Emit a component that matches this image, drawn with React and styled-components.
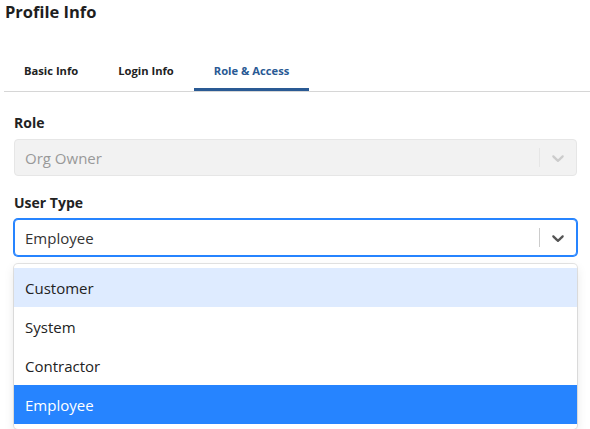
import React from "react";
import styled, { createGlobalStyle } from "styled-components";

const GlobalStyle = createGlobalStyle`
  body {
    margin: 0;
    background: #fff;
    font-family: "Open Sans", "Liberation Sans", sans-serif;
    color: #222;
  }
`;

const Chevron = ({ color }) => (
  <svg width="20" height="20" viewBox="0 0 20 20" fill={color}>
    <path d="M4.516 7.548c0.436-0.446 1.043-0.481 1.576 0l3.908 3.747 3.908-3.747c0.533-0.481 1.141-0.446 1.574 0 0.436 0.445 0.408 1.197 0 1.615-0.406 0.418-4.695 4.502-4.695 4.502-0.217 0.223-0.502 0.335-0.787 0.335s-0.57-0.112-0.789-0.335c0 0-4.287-4.084-4.695-4.502s-0.436-1.17 0-1.615z" />
  </svg>
);

const tabs = ["Basic Info", "Login Info", "Role & Access"];
const userTypes = ["Customer", "System", "Contractor", "Employee"];

const App = () => {
  return (
    <Page>
      <GlobalStyle />
      <Title>Profile Info</Title>
      <TabBar>
        {tabs.map((t, i) => (
          <Tab key={t} active={i === 2}>
            {t}
          </Tab>
        ))}
      </TabBar>
      <Form>
        <Field>
          <Label>Role</Label>
          <Select disabled>
            <Value disabled>Org Owner</Value>
            <Separator disabled />
            <Indicator>
              <Chevron color="#cccccc" />
            </Indicator>
          </Select>
        </Field>
        <Field>
          <Label>User Type</Label>
          <Select focused>
            <Value>Employee</Value>
            <Separator />
            <Indicator>
              <Chevron color="#555555" />
            </Indicator>
          </Select>
          <Menu>
            {userTypes.map((u, i) => (
              <Option key={u} hovered={i === 0} selected={u === "Employee"}>
                {u}
              </Option>
            ))}
          </Menu>
        </Field>
      </Form>
    </Page>
  );
};

const Page = styled.div`
  width: 590px;
`;

const Title = styled.h1`
  margin: 0;
  padding-left: 5px;
  font-size: 16.5px;
  line-height: 24px;
  font-weight: 700;
  color: #1e1e1e;
`;

const TabBar = styled.div`
  display: flex;
  margin: 28px 0 0 4px;
  border-bottom: 1px solid #d6d6d6;
`;

const Tab = styled.div`
  height: 36px;
  padding: 0 20px;
  display: flex;
  align-items: center;
  font-size: 11.2px;
  font-weight: 700;
  color: ${(p) => (p.active ? "#2a5a94" : "#222")};
  border-bottom: 3px solid ${(p) => (p.active ? "#2a5a94" : "transparent")};
`;

const Form = styled.div`
  padding: 21px 13px 0 14px;
`;

const Field = styled.div`
  display: flex;
  flex-direction: column;
  & + & {
    margin-top: 17px;
  }
`;

const Label = styled.label`
  font-size: 14px;
  line-height: 20px;
  font-weight: 700;
  color: #222;
  margin-bottom: 6px;
`;

const Select = styled.div`
  box-sizing: border-box;
  height: 37px;
  display: flex;
  align-items: center;
  border-radius: 4px;
  background: ${(p) => (p.disabled ? "#f2f2f2" : "#fff")};
  border: 1px solid
    ${(p) => (p.focused ? "#2684ff" : p.disabled ? "#e6e6e6" : "#ccc")};
  box-shadow: ${(p) => (p.focused ? "0 0 0 1px #2684ff" : "none")};
`;

const Value = styled.div`
  flex: 1;
  padding-left: 10px;
  font-size: 15px;
  color: ${(p) => (p.disabled ? "#999" : "#333")};
`;

const Separator = styled.span`
  align-self: stretch;
  width: 1px;
  margin: 8px 0;
  background: ${(p) => (p.disabled ? "#e6e6e6" : "#ccc")};
`;

const Indicator = styled.div`
  display: flex;
  padding: 8px;
`;

const Menu = styled.div`
  margin-top: 8px;
  padding: 4px 0 5px;
  border-radius: 4px;
  background: #fff;
  box-shadow: 0 0 0 1px rgba(0, 0, 0, 0.1), 0 4px 11px rgba(0, 0, 0, 0.1);
`;

const Option = styled.div`
  height: 39px;
  display: flex;
  align-items: center;
  padding-left: 11px;
  font-size: 15px;
  color: ${(p) => (p.selected ? "#fff" : "#222")};
  background: ${(p) =>
    p.selected ? "#2684ff" : p.hovered ? "#deebff" : "transparent"};
`;

export default App;
